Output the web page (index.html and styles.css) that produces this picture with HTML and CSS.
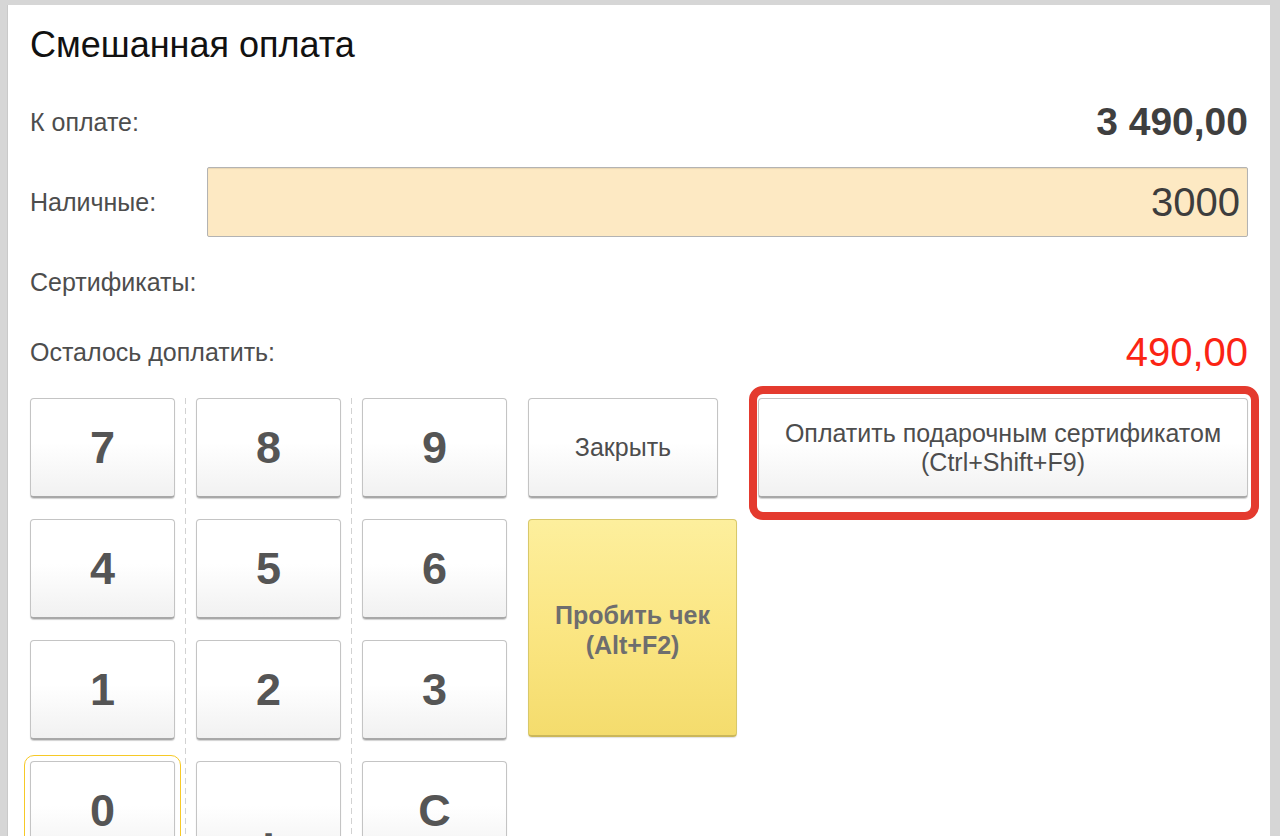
FILE: index.html
```html
<!DOCTYPE html>
<html lang="ru">
<head>
<meta charset="utf-8">
<title>Смешанная оплата</title>
<link rel="stylesheet" href="styles.css">
</head>
<body>
<div class="panel">
  <h1 class="title">Смешанная оплата</h1>
  <div class="form">
    <div class="row">
      <span class="label">К оплате:</span>
      <span class="total">3 490,00</span>
    </div>
    <div class="row row-input">
      <span class="label label-fixed">Наличные:</span>
      <div class="input">3000</div>
    </div>
    <div class="row">
      <span class="label">Сертификаты:</span>
    </div>
    <div class="row">
      <span class="label">Осталось доплатить:</span>
      <span class="rest">490,00</span>
    </div>
  </div>
  <div class="pad">
    <div class="keycol">
      <button class="btn key">7</button>
      <button class="btn key">4</button>
      <button class="btn key">1</button>
      <button class="btn key focused">0</button>
    </div>
    <div class="divider"></div>
    <div class="keycol">
      <button class="btn key">8</button>
      <button class="btn key">5</button>
      <button class="btn key">2</button>
      <button class="btn key comma">,</button>
    </div>
    <div class="divider"></div>
    <div class="keycol">
      <button class="btn key">9</button>
      <button class="btn key">6</button>
      <button class="btn key">3</button>
      <button class="btn key">C</button>
    </div>
    <div class="actions">
      <button class="btn close">Закрыть</button>
      <button class="btn print">Пробить чек<br>(Alt+F2)</button>
    </div>
    <div class="cert">
      <button class="btn cert-btn">Оплатить подарочным сертификатом<br>(Ctrl+Shift+F9)</button>
    </div>
  </div>
</div>
</body>
</html>
```
FILE: styles.css
```css
html, body {
  margin: 0;
  padding: 0;
}
body {
  width: 1280px;
  height: 836px;
  overflow: hidden;
  background: #d6d6d6;
  font-family: "Liberation Sans", Arial, sans-serif;
}
.panel {
  box-sizing: border-box;
  margin: 5px 10px 0 7px;
  height: 831px;
  background: #fff;
  padding: 20px 22px 0 22px;
  border-left: 1px solid #c9c9c9;
}
.title {
  margin: 0 0 32px;
  font-size: 36px;
  line-height: 40px;
  font-weight: normal;
  color: #111;
}
.form {
  display: flex;
  flex-direction: column;
  gap: 20px;
}
.row {
  display: flex;
  align-items: center;
  height: 50px;
}
.row-input {
  height: 70px;
}
.row:last-child {
  height: 51px;
}
.label {
  font-size: 25px;
  color: #4d4d4d;
}
.label-fixed {
  width: 177px;
  flex: none;
}
.total {
  margin-left: auto;
  font-size: 39px;
  font-weight: bold;
  color: #3f3f3f;
}
.rest {
  margin-left: auto;
  font-size: 40px;
  color: #fb2414;
}
.input {
  flex: 1;
  height: 70px;
  box-sizing: border-box;
  background: #fde9c3;
  border: 1px solid #b3b3b3;
  border-radius: 2px;
  box-shadow: inset 0 1px 1px rgba(0,0,0,0.08);
  text-align: right;
  padding-right: 7px;
  font-size: 40px;
  line-height: 68px;
  color: #3d3d3d;
}
.pad {
  display: flex;
  margin-top: 20px;
}
.keycol {
  display: flex;
  flex-direction: column;
  gap: 21px;
  width: 145px;
}
.divider {
  width: 1px;
  margin: 0 10px;
  height: 460px;
  background: repeating-linear-gradient(to bottom, #d2d2d2 0 6px, transparent 6px 10px);
}
.btn {
  box-sizing: border-box;
  margin: 0;
  padding: 0;
  font-family: "Liberation Sans", Arial, sans-serif;
  border: 1px solid #c4c4c4;
  border-bottom: 2px solid #a8a8a8;
  border-radius: 4px;
  background: linear-gradient(to bottom, #ffffff 0%, #ffffff 45%, #f1f1f1 100%);
  box-shadow: 0 1px 1px rgba(0,0,0,0.18);
  color: #4f4f4f;
  cursor: default;
}
.key {
  height: 100px;
  width: 145px;
  font-size: 45px;
  font-weight: bold;
  color: #555;
}
.comma {
  padding-top: 28px;
}
.focused {
  outline: 1px solid #f6c927;
  outline-offset: 5px;
}
.actions {
  display: flex;
  flex-direction: column;
  gap: 21px;
  margin-left: 21px;
  width: 209px;
}
.close {
  width: 190px;
  height: 100px;
  font-size: 25px;
  color: #4d4d4d;
}
.print {
  height: 218px;
  width: 209px;
  font-size: 25px;
  font-weight: bold;
  line-height: 30px;
  color: #6e6e6e;
  border: 1px solid #d8c86a;
  border-bottom: 2px solid #cbb75a;
  background: linear-gradient(to bottom, #fdef9d 0%, #fbe683 50%, #f4dc6d 100%);
  box-shadow: 0 1px 1px rgba(0,0,0,0.12);
  padding-top: 4px;
}
.cert {
  flex: 1;
  margin-left: 21px;
  position: relative;
  align-self: flex-start;
}
.cert::after {
  content: "";
  position: absolute;
  top: -12px;
  bottom: -22px;
  left: -9px;
  right: -11px;
  border: 8px solid #e43a2e;
  border-radius: 14px;
  pointer-events: none;
}
.cert-btn {
  display: block;
  width: 100%;
  height: 100px;
  font-size: 25px;
  line-height: 29px;
  color: #4d4d4d;
}
```
